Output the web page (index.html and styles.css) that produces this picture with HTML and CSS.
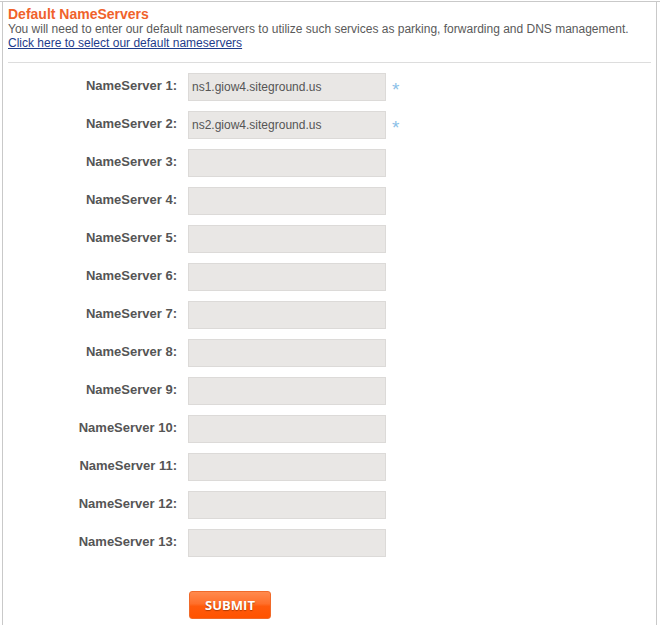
FILE: index.html
```html
<!DOCTYPE html>
<html>
<head>
<meta charset="utf-8">
<link rel="stylesheet" href="styles.css">
</head>
<body>
<div class="frame">
  <div class="box">
    <div class="head">
      <h2 class="title">Default NameServers</h2>
      <p class="desc">You will need to enter our default nameservers to utilize such services as parking, forwarding and DNS management.</p>
      <a class="link" href="#">Click here to select our default nameservers</a>
    </div>
    <div class="rule"></div>
    <form class="form">
      <div class="row"><label class="lbl">NameServer 1:</label><input class="inp" value="ns1.giow4.siteground.us"><span class="req">*</span></div>
      <div class="row"><label class="lbl">NameServer 2:</label><input class="inp" value="ns2.giow4.siteground.us"><span class="req">*</span></div>
      <div class="row"><label class="lbl">NameServer 3:</label><input class="inp"></div>
      <div class="row"><label class="lbl">NameServer 4:</label><input class="inp"></div>
      <div class="row"><label class="lbl">NameServer 5:</label><input class="inp"></div>
      <div class="row"><label class="lbl">NameServer 6:</label><input class="inp"></div>
      <div class="row"><label class="lbl">NameServer 7:</label><input class="inp"></div>
      <div class="row"><label class="lbl">NameServer 8:</label><input class="inp"></div>
      <div class="row"><label class="lbl">NameServer 9:</label><input class="inp"></div>
      <div class="row"><label class="lbl">NameServer 10:</label><input class="inp"></div>
      <div class="row"><label class="lbl">NameServer 11:</label><input class="inp"></div>
      <div class="row"><label class="lbl">NameServer 12:</label><input class="inp"></div>
      <div class="row"><label class="lbl">NameServer 13:</label><input class="inp"></div>
      <div class="actions"><button class="submit" type="button">SUBMIT</button></div>
    </form>
  </div>
</div>
</body>
</html>
```
FILE: styles.css
```css
html, body {
  margin: 0;
  padding: 0;
  background: #fff;
  overflow: hidden;
}
body {
  font-family: Arial, "Liberation Sans", sans-serif;
  color: #555;
}
.frame {
  margin-top: 1px;
  border-top: 1px solid #c9c9c9;
}
.box {
  margin-left: 2px;
  width: 653px;
  min-height: 700px;
  border-left: 1px solid #c9c9c9;
  border-right: 1px solid #c9c9c9;
}
.head {
  padding: 4px 0 0 5px;
}
.title {
  margin: 0;
  font-size: 14px;
  line-height: 16px;
  font-weight: bold;
  color: #f0622b;
}
.desc {
  margin: 0;
  font-size: 12px;
  line-height: 14px;
  color: #5a5a5a;
}
.link {
  display: block;
  font-size: 12px;
  line-height: 14px;
  color: #1e3c8c;
  text-decoration: underline;
}
.rule {
  margin: 12px 5px 0 5px;
  height: 1px;
  background: #dddddd;
}
.form {
  margin: 10px 0 0 0;
  display: flex;
  flex-direction: column;
  gap: 10px;
}
.row {
  display: flex;
  align-items: center;
  height: 28px;
}
.lbl {
  width: 174px;
  text-align: right;
  font-size: 13px;
  font-weight: bold;
  color: #555;
  line-height: 16px;
  margin-top: -3px;
}
.inp {
  box-sizing: border-box;
  margin: 0 0 0 11px;
  width: 198px;
  height: 28px;
  padding: 0 0 0 3px;
  border: 1px solid #dcdad8;
  background: #e9e7e5;
  font-family: Arial, "Liberation Sans", sans-serif;
  font-size: 12px;
  color: #555;
  outline: none;
}
.req {
  margin-left: 6px;
  font-size: 19px;
  line-height: 28px;
  padding-top: 5px;
  color: #8cc1e8;
}
.actions {
  padding: 24px 0 0 186px;
}
.submit {
  width: 82px;
  height: 28px;
  border: 1px solid #f06a2a;
  border-radius: 3px;
  background: linear-gradient(#ff8a4e 0%, #ff6f2a 45%, #ff5a0c 55%, #ff5300 100%);
  color: #fff;
  font-family: "Open Sans", Arial, sans-serif;
  font-weight: bold;
  font-size: 13px;
  text-shadow: 0 1px 1px rgba(120, 40, 0, 0.6);
  padding: 0;
  cursor: pointer;
}
```
